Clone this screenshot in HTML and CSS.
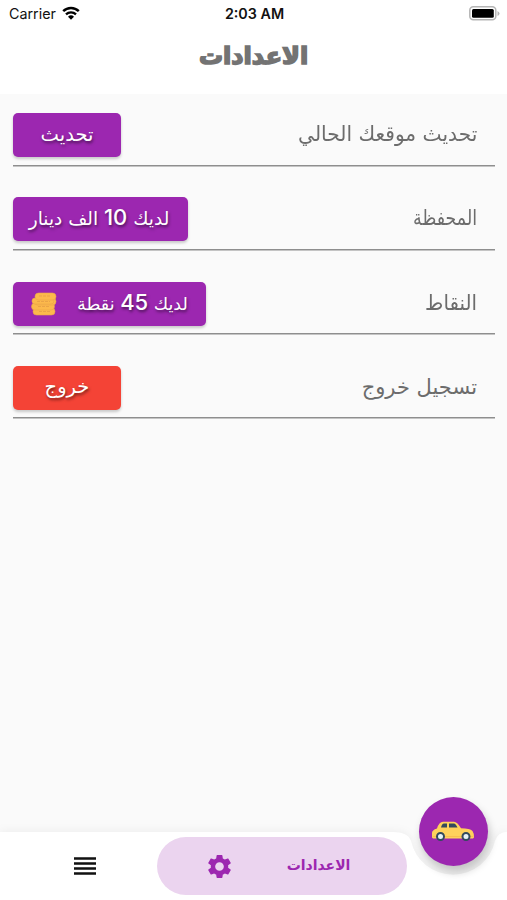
FILE: index.html
```html
<!DOCTYPE html>
<html lang="ar" dir="rtl">
<head>
  <meta charset="UTF-8" />
  <meta name="viewport" content="width=device-width, initial-scale=1.0" />
  <title>الاعدادات</title>
  <link rel="stylesheet" href="styles.css">
</head>
<body>
  <div class="screen">
    <div class="status-bar" dir="ltr">
      <div class="carrier">
        <span>Carrier</span>
        <svg width="18" height="14" viewBox="0 0 18 14">
          <path d="M1.2 5.2a11.2 11.2 0 0 1 15.6 0" fill="none" stroke="#000" stroke-width="2.5"/>
          <path d="M4 8.3a7.2 7.2 0 0 1 10 0" fill="none" stroke="#000" stroke-width="2.3"/>
          <path d="M9 13.8 6 10.8a4.3 4.3 0 0 1 6 0z"/>
        </svg>
      </div>
      <div class="time">2:03 AM</div>
      <div class="battery">
        <svg width="31" height="15" viewBox="0 0 31 15">
          <rect x=".8" y=".8" width="26" height="13" rx="3.5" fill="#fff" stroke="#b5b5b5" stroke-width="1.5"/>
          <rect x="3" y="3" width="21.8" height="8.8" rx="1.5"/>
          <path d="M28.5 5v5q2-1 2-2.5t-2-2.5z" fill="#b5b5b5"/>
        </svg>
      </div>
    </div>
    <header class="header"><h1>الاعدادات</h1></header>

    <main class="settings">
      <div class="row">
        <span class="label label-location">تحديث موقعك الحالي</span>
        <button class="btn">تحديث</button>
      </div>
      <div class="row">
        <span class="label label-wallet">المحفظة</span>
        <button class="btn btn-wallet"><span>لديك <b>10</b> الف دينار</span></button>
      </div>
      <div class="row">
        <span class="label label-points">النقاط</span>
        <button class="btn btn-points">
          <span>لديك <b>45</b> نقطة</span>
          <svg class="coins" width="26" height="24" viewBox="0 0 26 24">
            <g fill="#fcb94c" stroke="#eba548" stroke-width=".6">
              <rect x="2" y="16" width="22" height="7" rx="3.5"/>
              <rect x=".5" y="11" width="23" height="7" rx="3.5"/>
              <rect x="3" y="6" width="22" height="7" rx="3.5"/>
              <rect x="1" y="6" width="22" height="6" rx="3"/>
              <rect x="4" y="1" width="21" height="7" rx="3.5"/>
            </g>
            <path d="M8 4h12M6 9.5h13M7 14.5h12M8 19.5h11" stroke="#e39b45" stroke-width=".7" stroke-dasharray="3 1"/>
          </svg>
        </button>
      </div>
      <div class="row">
        <span class="label">تسجيل خروج</span>
        <button class="btn btn-logout">خروج</button>
      </div>
    </main>

    <nav class="bottom-bar">
      <svg class="bar-shape" width="507" height="68" viewBox="0 0 507 68">
        <path d="M0 0H392Q408 0 411 9A43 43 0 0 0 495 9Q498 0 507 0V68H0z" fill="#fff"/>
      </svg>
      <button class="fab">
        <svg width="44" height="20" viewBox="0 0 44 20">
          <path d="M1 16.5V12q0-3 5-4.500Q8 1 12 .8h11q3 0 7 6.400 9 .2 11.500 2.700 1.500 2 1.500 6.600l-1 1H2z" fill="#ffd15c"/>
          <path d="M10 6.500q1-4 3-4h3v4zM18 2.500h5q1.500 0 3.500 4H18z" fill="#334a5e"/>
          <path d="M2 15.500h40" stroke="#f7b84c" stroke-width=".8"/>
          <g fill="#e6f2f8" stroke="#334a5e" stroke-width="2">
            <circle cx="9.500" cy="15.500" r="3.500"/>
            <circle cx="35" cy="15.500" r="3.500"/>
          </g>
        </svg>
      </button>
      <div class="tab active">
        <span>الاعدادات</span>
        <svg width="29" height="29" viewBox="0 0 24 24" fill="#9c27b0">
          <path d="M19.140 12.940c.040-.300.060-.610.060-.940s-.020-.640-.070-.940l2.030-1.580c.180-.140.230-.410.120-.610l-1.920-3.320c-.120-.220-.370-.290-.590-.220l-2.390.960c-.500-.380-1.030-.700-1.620-.940L14.400 2.810c-.040-.240-.240-.410-.480-.410h-3.840c-.240 0-.430.170-.470.410L9.250 5.350c-.590.240-1.130.570-1.620.940l-2.390-.960c-.220-.080-.470 0-.590.220L2.740 8.870c-.120.210-.080.470.120.610l2.030 1.580c-.050.300-.090.630-.090.940s.020.640.070.940l-2.030 1.580c-.180.140-.230.410-.120.610l1.920 3.320c.120.220.370.290.590.220l2.390-.960c.500.380 1.030.700 1.620.940l.360 2.540c.050.240.240.410.480.410h3.840c.240 0 .440-.170.470-.410l.360-2.540c.590-.240 1.130-.560 1.620-.940l2.390.960c.220.080.470 0 .590-.220l1.920-3.320c.120-.220.070-.470-.120-.610zM12 15.600A3.600 3.600 0 1 1 12 8.400a3.600 3.600 0 0 1 0 7.200z"/>
        </svg>
      </div>
      <div class="tab">
        <svg width="22" height="18" viewBox="0 0 22 18">
          <path d="M0 1.500h22M0 6.500h22M0 11.500h22M0 16.500h22" stroke="#111" stroke-width="2.500"/>
        </svg>
      </div>
    </nav>
  </div>
</body>
</html>
```

FILE: styles.css
```css
* {
  box-sizing: border-box;
}
body {
  margin: 0;
  font-family: "DejaVu Sans", sans-serif;
  background: #fafafa;
}
.screen {
  height: 900px;
  display: flex;
  flex-direction: column;
  overflow: hidden;
}
.status-bar {
  display: grid;
  grid-template-columns: 1fr auto 1fr;
  align-items: center;
  height: 28px;
  padding: 0 7px 2px 9px;
  background: #fff;
  font-family: Inter, sans-serif;
  font-size: 14.300px;
  color: #111;
}
.carrier {
  display: flex;
  align-items: center;
  gap: 6px;
}
.time {
  font-weight: 600;
}
.battery {
  display: flex;
  justify-content: flex-end;
}
.header {
  height: 66px;
  background: #fff;
  text-align: center;
}
.header h1 {
  margin: 11px 0 0;
  font-size: 24px;
  line-height: 34px;
  font-weight: bold;
  color: #737373;
  -webkit-text-stroke: 1.600px #737373;
}
.settings {
  flex: 1;
  padding: 0 12px 0 13px;
}
.row {
  display: flex;
  justify-content: space-between;
  align-items: flex-start;
  height: 84.300px;
  padding: 19px 18px 0 0;
  background: linear-gradient(#8e8e8e, #8e8e8e) 0 70.500px / 100% 1.500px no-repeat;
}
.label {
  font-size: 21px;
  line-height: 42px;
  color: #6c6c6c;
  white-space: nowrap;
  transform-origin: right;
}
.label-location {
  transform: scaleX(0.962);
}
.label-wallet {
  transform: scaleX(0.83);
}
.label-points {
  transform: scaleX(0.945);
}
.btn {
  display: flex;
  align-items: center;
  justify-content: center;
  gap: 20px;
  width: 108px;
  height: 44px;
  padding: 0 0 2px;
  border: none;
  border-radius: 5px;
  background: #9c27b0;
  color: #fff;
  font-family: "DejaVu Sans", sans-serif;
  font-size: 19.500px;
  white-space: nowrap;
  text-shadow: 1px 2px 3px rgba(0,0,0,0.5);
  box-shadow: 0 2px 3px rgba(0,0,0,0.2);
}
.btn b {
  font-family: Inter, sans-serif;
  font-size: 22px;
  font-weight: 500;
}
.btn-wallet {
  width: 175px;
  padding: 0 3px 4px 0;
  font-size: 18.500px;
}
.btn-points {
  width: 193px;
  padding-bottom: 3px;
  font-size: 17.500px;
}
.coins {
  position: relative;
  top: 2px;
}
.btn-logout {
  background: #f44336;
}
.bottom-bar {
  position: relative;
  display: flex;
  align-items: center;
  height: 68px;
  padding-right: 100px;
}
.bar-shape {
  position: absolute;
  top: 0;
  left: 0;
  filter: drop-shadow(0 -1px 4px rgba(0,0,0,0.05));
}
.fab {
  position: absolute;
  top: -35px;
  left: 419px;
  display: flex;
  align-items: center;
  justify-content: center;
  width: 69px;
  height: 69px;
  padding: 0 1px 2px 0;
  border: none;
  border-radius: 50%;
  background: #9c27b0;
  box-shadow: 2px 6px 9px rgba(0,0,0,0.22);
}
.tab {
  position: relative;
  display: flex;
  align-items: center;
  justify-content: center;
  flex: 1;
  padding-left: 13px;
}
.tab.active {
  flex: none;
  gap: 53px;
  width: 250px;
  height: 58px;
  padding: 0 9px 0 0;
  border-radius: 29px;
  background: #ebd4ef;
  color: #9c27b0;
  font-size: 14px;
  font-weight: bold;
}
.tab.active span {
  padding-bottom: 3px;
}
```
